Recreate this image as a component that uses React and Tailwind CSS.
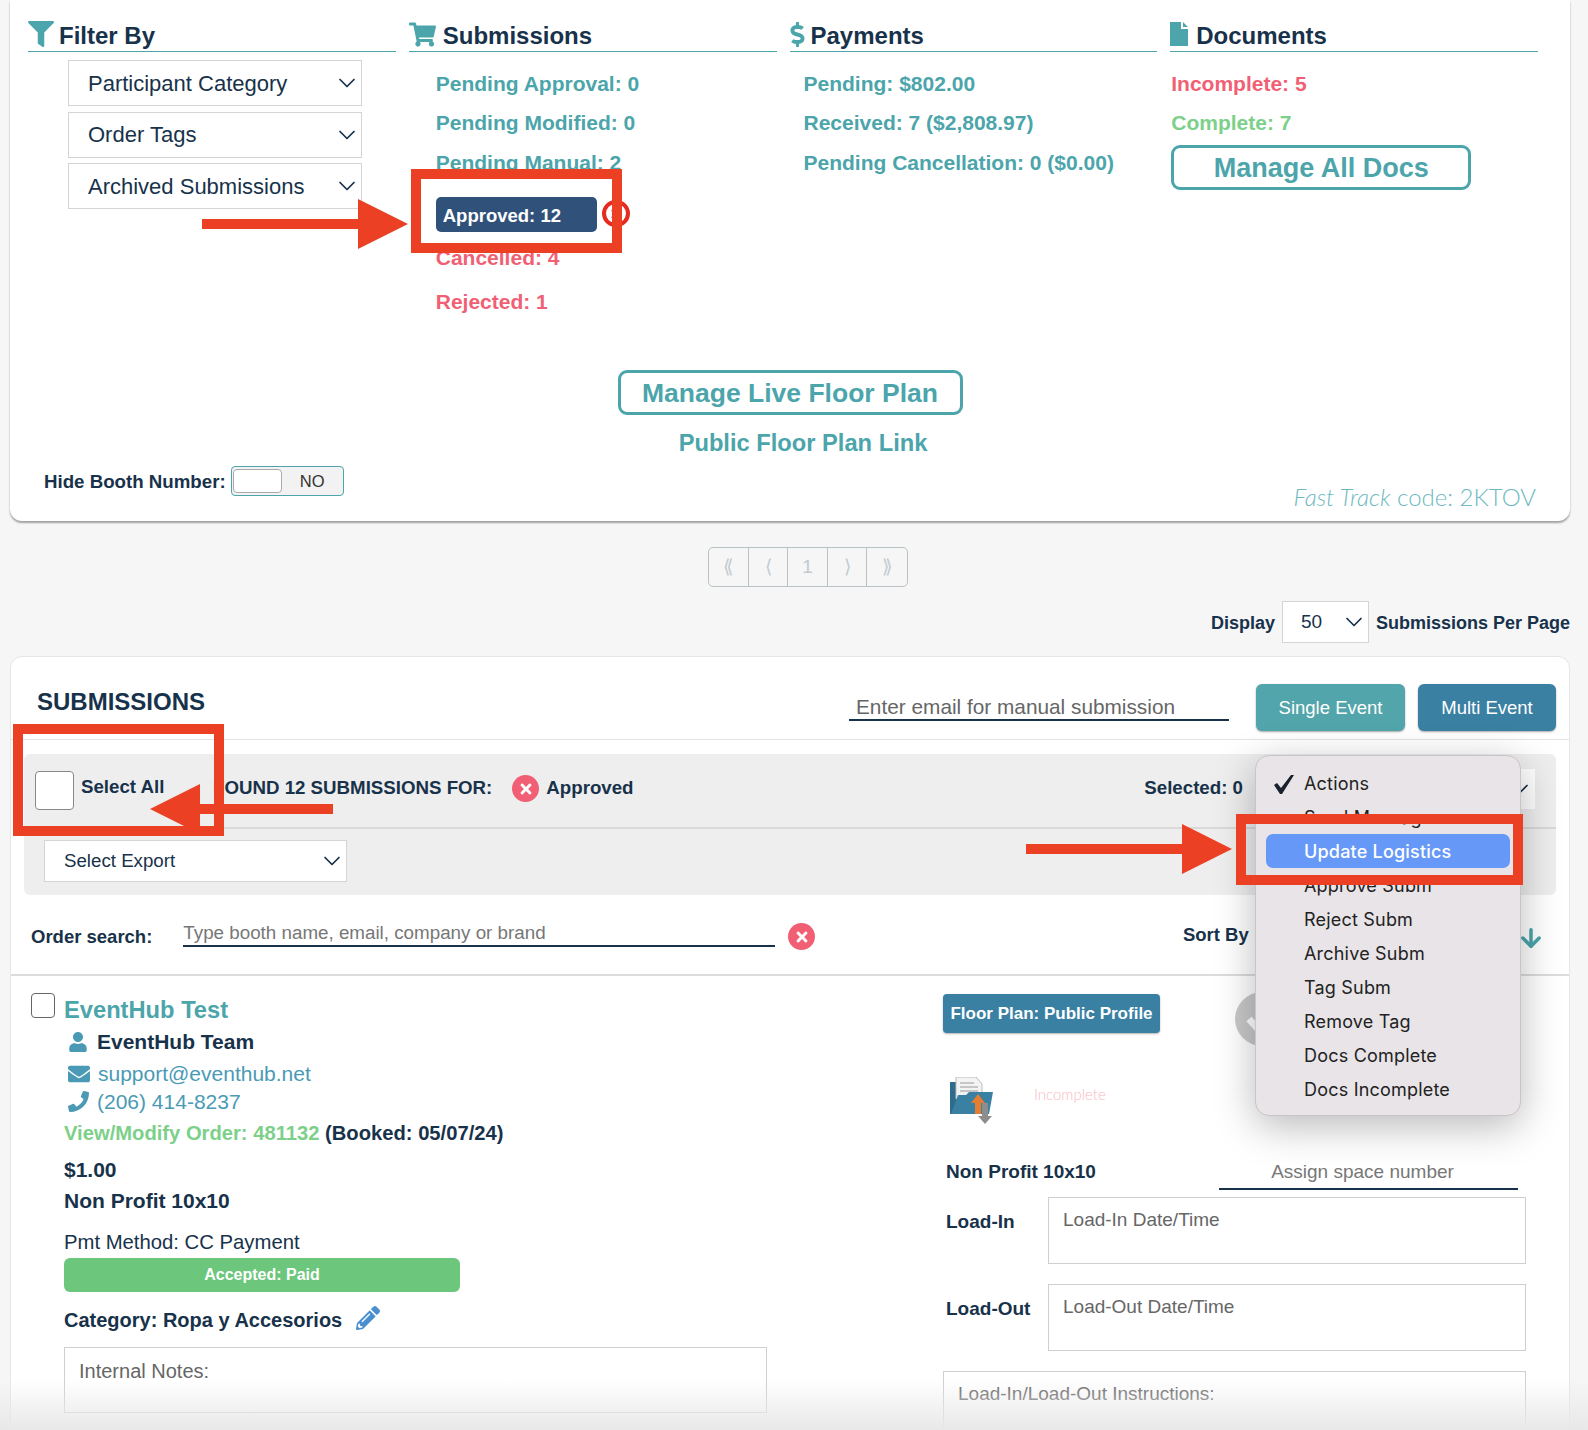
import { ChevronDown, ArrowDown } from 'lucide-react'
import { FaDollarSign, FaEnvelope, FaFilter, FaPencilAlt, FaPhoneAlt, FaShoppingCart, FaTimes, FaUser } from 'react-icons/fa'

const menuItems = ['Reject Subm', 'Archive Subm', 'Tag Subm', 'Remove Tag', 'Docs Complete', 'Docs Incomplete']

function Heading({ icon, title }) {
  return (
    <div className="flex h-[52px] items-end gap-[5px] border-b-[1.5px] border-[#4ba5ab] text-[24px] leading-[30px] font-bold text-[#17324a]">
      <span className="mb-[4px] flex h-[26px] items-center text-[#4ba5ab]">{icon}</span>
      {title}
    </div>
  )
}

function Dropdown({ label, className }) {
  return (
    <div className={`flex items-center justify-between border-[1.5px] border-[#d4d4d4] bg-white text-[#17324a] ${className}`}>
      <span>{label}</span>
      <ChevronDown size={28} strokeWidth={1.5} />
    </div>
  )
}

function Stat({ children, color = 'text-[#4ba5ab]', className = '' }) {
  return <div className={`flex h-[40px] items-center text-[21px] font-bold ${color} ${className}`}>{children}</div>
}

function XCircle() {
  return (
    <span className="flex h-[27px] w-[27px] items-center justify-center rounded-full bg-[#f15f74] text-white">
      <FaTimes size={16} />
    </span>
  )
}

function PageCell({ children, last }) {
  return (
    <div className={`flex h-full w-[39.5px] items-center justify-center text-[19px] text-[#c3cbce] ${last ? '' : 'border-r-[1.5px] border-[#b9c2c6]'}`}>
      {children}
    </div>
  )
}

function Arrow({ className, width, height, points }) {
  return (
    <svg className={`absolute z-30 ${className}`} width={width} height={height} viewBox={`0 0 ${width} ${height}`}>
      <polygon points={points} fill="#ec4024" />
    </svg>
  )
}

function App() {
  return (
    <div className="relative h-[1430px] overflow-hidden bg-[#f6f6f6] font-['Liberation_Sans',Arial,sans-serif] text-[#17324a]">
      {/* top summary card */}
      <section className="mr-[18px] ml-[10px] h-[521px] rounded-b-xl bg-white shadow-[0_2px_2px_rgba(0,0,0,0.35)]">
        <div className="grid h-[322px] grid-cols-4 gap-x-[13px] pr-[32px] pl-[18px]">
          <div>
            <Heading icon={<FaFilter size={26} />} title="Filter By" />
            <div className="mt-[8px] ml-[40px] flex w-[294px] flex-col gap-[5.5px] text-[22px]">
              <Dropdown label="Participant Category" className="h-[46px] pl-[19px]" />
              <Dropdown label="Order Tags" className="h-[46px] pl-[19px]" />
              <Dropdown label="Archived Submissions" className="h-[46px] pl-[19px]" />
            </div>
          </div>

          <div>
            <Heading icon={<FaShoppingCart size={27} className="mr-[2px]" />} title="Submissions" />
            <div className="mt-[12px] pl-[27px]">
              <Stat>Pending Approval: 0</Stat>
              <Stat className="-mt-px">Pending Modified: 0</Stat>
              <Stat>Pending Manual: 2</Stat>
              <div className="mt-[14px] flex h-[35px] w-[161px] items-center rounded-[5px] bg-[#30527a] pt-[2px] pl-[7px] text-[18.5px] font-bold text-white">Approved: 12</div>
              <Stat color="text-[#f15f74]" className="mt-[6px]">Cancelled: 4</Stat>
              <Stat color="text-[#f15f74]" className="mt-[4px]">Rejected: 1</Stat>
            </div>
          </div>

          <div>
            <Heading icon={<FaDollarSign size={25} className="-mr-[4px] -ml-[5px]" />} title="Payments" />
            <div className="mt-[12px] pl-[14px]">
              <Stat>Pending: $802.00</Stat>
              <Stat className="-mt-px">Received: 7 ($2,808.97)</Stat>
              <Stat>Pending Cancellation: 0 ($0.00)</Stat>
            </div>
          </div>

          <div>
            <Heading
              icon={
                <svg className="mr-[3px]" width="18" height="24" viewBox="0 0 18 24" fill="#4ba5ab">
                  <path d="M0 0h11v7h7v17H0zM13 0l5 5h-5z" />
                </svg>
              }
              title="Documents"
            />
            <div className="mt-[12px] pl-[1px]">
              <Stat color="text-[#f15f74]">Incomplete: 5</Stat>
              <Stat color="text-[#7dd089]" className="-mt-px">Complete: 7</Stat>
              <div className="mt-[2px] flex h-[45px] w-[300px] items-center justify-center rounded-[9px] border-[3px] border-[#4ba5ab] pt-[2px] text-[27px] font-bold text-[#4ba5ab]">Manage All Docs</div>
            </div>
          </div>
        </div>

        <div className="mt-[48px] flex flex-col items-center">
          <div className="flex h-[45px] w-[345px] items-center justify-center rounded-[9px] border-[3px] border-[#4ba5ab] pt-[2px] text-[26.5px] font-bold text-[#4ba5ab]">Manage Live Floor Plan</div>
          <div className="mt-[14px] pl-[26px] text-[23.7px] leading-[28px] font-bold text-[#4ba5ab]">Public Floor Plan Link</div>
        </div>

        <div className="mt-[9px] flex items-start justify-between pr-[34px] pl-[34px]">
          <div className="flex h-[30px] items-center gap-[5px]">
            <span className="pt-[2px] text-[18.7px] font-bold">Hide Booth Number:</span>
            <div className="flex h-[30px] w-[113px] items-center rounded-[4px] border-[1.5px] border-[#4ba5ab] bg-[#f2f2f2] pl-[1px]">
              <span className="h-[24px] w-[49px] rounded-[4px] border border-[#aaa] bg-white" />
              <span className="flex-1 text-center text-[16.5px] text-[#333]">NO</span>
            </div>
          </div>
          <div className="mt-[17px] font-['Lato',sans-serif] text-[24px] leading-[28px] font-light text-[#6db9bf]">
            <i>Fast Track</i> code: 2KTOV
          </div>
        </div>
      </section>

      {/* pagination */}
      <div className="mt-[26px] flex justify-center pl-[28px]">
        <div className="flex h-[40px] rounded-[5px] border-[1.5px] border-[#b9c2c6]">
          <PageCell>⟪</PageCell>
          <PageCell>⟨</PageCell>
          <PageCell>1</PageCell>
          <PageCell>⟩</PageCell>
          <PageCell last>⟫</PageCell>
        </div>
      </div>

      <div className="mt-[14px] flex h-[42px] items-center justify-end gap-[7px] pr-[18px] text-[18px] font-bold">
        <span className="pt-[2px]">Display</span>
        <Dropdown label={<span className="text-[19px] font-normal">50</span>} className="h-[42px] w-[87px] pl-[18px]" />
        <span className="pt-[2px]">Submissions Per Page</span>
      </div>

      {/* submissions card */}
      <section className="mt-[13px] mr-[18px] ml-[10px] h-[800px] rounded-t-xl border border-[#e6e6e6] bg-white">
        <div className="flex h-[83px] items-start justify-between border-b-[1.5px] border-[#e4e4e4] pr-[13px] pl-[26px]">
          <h2 className="mt-[30px] text-[24px] leading-[30px] font-bold">SUBMISSIONS</h2>
          <div className="mt-[27px] flex items-start">
            <input
              placeholder="Enter email for manual submission"
              className="mt-[7px] mr-[27px] h-[30px] w-[380px] border-b-2 border-[#17324a] pt-[4px] pl-[7px] text-[20.8px] outline-none placeholder:text-[#666]"
            />
            <button className="mr-[13px] h-[47px] w-[149px] rounded-[6px] bg-[#52a5aa] text-[18.5px] text-white shadow-[0_1px_2px_rgba(0,0,0,0.35)]">Single Event</button>
            <button className="h-[47px] w-[138px] rounded-[6px] bg-[#3a80a3] text-[18.5px] text-white shadow-[0_1px_2px_rgba(0,0,0,0.35)]">Multi Event</button>
          </div>
        </div>

        <div className="mx-[13px] mt-[14px] h-[141px] rounded-[6px] bg-[#eeeeee]">
          <div className="flex h-[75px] items-center border-b-2 border-[#d9d9d9] pr-[21px] pl-[11px] text-[18.7px] font-bold">
            <span className="mr-[7px] h-[39px] w-[39px] rounded-[4px] border-[1.5px] border-[#888] bg-white" />
            <span className="w-[132px] pb-[6px]">Select All</span>
            <span className="pb-[4px]">FOUND 12 SUBMISSIONS FOR:</span>
            <span className="mr-[7px] ml-[20px] pb-[4px]"><XCircle /></span>
            <span className="pb-[4px]">Approved</span>
            <span className="mr-[22px] ml-auto pb-[4px]">Selected: 0</span>
            <Dropdown label="" className="mb-[4px] h-[40px] w-[270px] border-transparent" />
          </div>
          <Dropdown label="Select Export" className="mt-[11px] ml-[20px] h-[42px] w-[303px] pl-[19px] text-[18.7px]" />
        </div>

        <div className="flex h-[81px] items-center border-b-2 border-[#dcdcdc] pr-[24px] pl-[20px] text-[18.5px]">
          <span className="mr-[31px] pt-[5px] font-bold">Order search:</span>
          <input
            placeholder="Type booth name, email, company or brand"
            className="mb-[3px] h-[27px] w-[592px] border-b-2 border-[#17324a] pt-[3px] text-[18.8px] outline-none placeholder:text-[#777]"
          />
          <span className="ml-[13px] pt-[4px]"><XCircle /></span>
          <span className="mr-[257px] ml-auto font-bold">Sort By :</span>
          <ArrowDown size={28} strokeWidth={3} className="mt-[7px] text-[#4ba5ab]" />
        </div>

        {/* order row */}
        <div className="grid grid-cols-[932px_1fr] pt-[17px]">
          <div className="pl-[20px]">
            <div className="flex">
              <span className="h-[25px] w-[24px] rounded-[4px] border-[1.5px] border-[#666] bg-white" />
              <span className="mt-[2px] ml-[9px] text-[23.7px] leading-[30px] font-bold text-[#4ba5ab]">EventHub Test</span>
            </div>
            <div className="mt-[2px] ml-[37px] flex h-[30px] items-center gap-[9px] text-[21px] font-bold">
              <FaUser size={20} className="text-[#4a9ab5]" /> EventHub Team
            </div>
            <div className="mt-[1px] ml-[37px] flex h-[31px] items-center gap-[8px] text-[21px] text-[#4a9ab5]">
              <FaEnvelope size={22} /> support@eventhub.net
            </div>
            <div className="-mt-[3px] ml-[37px] flex h-[31px] items-center gap-[8px] text-[21px] text-[#4a9ab5]">
              <FaPhoneAlt size={21} className="-scale-x-100" /> (206) 414-8237
            </div>
            <div className="mt-[1px] ml-[33px] h-[30px] text-[20.2px] leading-[30px] font-bold text-[#7dd089]">
              View/Modify Order: 481132 <span className="text-[#17324a]">(Booked: 05/07/24)</span>
            </div>
            <div className="mt-[7px] ml-[33px] text-[21px] leading-[30px] font-bold">$1.00</div>
            <div className="mt-[1px] ml-[33px] text-[21px] leading-[30px] font-bold">Non Profit 10x10</div>
            <div className="mt-[11px] ml-[33px] text-[20.3px] leading-[30px]">Pmt Method: CC Payment</div>
            <div className="mt-[1px] ml-[33px] flex h-[34px] w-[396px] items-center justify-center rounded-[6px] bg-[#6cc67c] text-[16px] font-bold text-white">Accepted: Paid</div>
            <div className="mt-[13px] ml-[33px] flex h-[30px] items-center gap-[14px] text-[20px] font-bold">
              Category: Ropa y Accesorios <FaPencilAlt size={24} className="mb-[4px] text-[#4a90d0]" />
            </div>
            <div className="mt-[12px] ml-[33px] h-[66px] w-[703px] border-[1.5px] border-[#cfcfcf] px-[14px] pt-[8px] text-[20px] text-[#666]">Internal Notes:</div>
          </div>

          <div>
            <div className="flex items-start">
              <div className="mt-[1px] flex h-[39px] w-[217px] items-center justify-center rounded-[4px] bg-[#3a80a3] text-[17px] font-bold text-white shadow-[0_1px_2px_rgba(0,0,0,0.3)]">Floor Plan: Public Profile</div>
              <svg className="-mt-[1px] ml-[75px]" width="54" height="54" viewBox="0 0 54 54">
                <circle cx="27" cy="27" r="27" fill="#c9c9c9" />
                <path d="M14 27l9 10 18-20" fill="none" stroke="#fff" strokeWidth="7" />
              </svg>
            </div>
            <div className="mt-[31px] flex items-center">
              <svg className="ml-[5px]" width="46" height="47" viewBox="0 0 46 47">
                <path d="M2 5h8l2 6v26H2z" fill="#2f6c8c" />
                <path d="M8 0h20l6 7v15H8z" fill="#f3f3f3" stroke="#bbb" />
                <path d="M12 6h14M12 10h18M12 14h18" stroke="#999" />
                <path d="M3 37l7-19h8l3-3h24l-4 22z" fill="#3a80a3" />
                <path d="M30 17l7 9h-4v11h-6V26h-4z" fill="#e67e32" />
                <path d="M34 26h6v13h4l-7 8-7-8h4z" fill="#8d8d8d" />
              </svg>
              <span className="mb-[12px] ml-[40px] font-['Lato',sans-serif] text-[15px] font-light text-[#f8b9c4]">Incomplete</span>
            </div>
            <div className="mt-[31px] flex items-center">
              <span className="ml-[3px] w-[273px] text-[19px] font-bold">Non Profit 10x10</span>
              <input
                placeholder="Assign space number"
                className="h-[35px] w-[299px] border-b-2 border-[#17324a] pr-[12px] text-center text-[19px] outline-none placeholder:text-[#777]"
              />
            </div>
            <div className="mt-[7px] flex">
              <span className="mt-[11px] ml-[3px] w-[102px] text-[19px] font-bold">Load-In</span>
              <div className="h-[67px] w-[478px] border-[1.5px] border-[#cfcfcf] px-[14px] pt-[8px] text-[19px] text-[#666]">Load-In Date/Time</div>
            </div>
            <div className="mt-[20px] flex">
              <span className="mt-[11px] ml-[3px] w-[102px] text-[19px] font-bold">Load-Out</span>
              <div className="h-[67px] w-[478px] border-[1.5px] border-[#cfcfcf] px-[14px] pt-[8px] text-[19px] text-[#666]">Load-Out Date/Time</div>
            </div>
            <div className="mt-[20px] h-[90px] w-[583px] border-[1.5px] border-[#cfcfcf] px-[14px] pt-[8px] text-[19px] text-[#666]">Load-In/Load-Out Instructions:</div>
          </div>
        </div>
      </section>

      {/* native actions menu, open over the page */}
      <div className="absolute top-[755px] left-[1255px] z-10 h-[361px] w-[266px] rounded-[14px] border border-[#c8c4c7] bg-[#e8e4e7] font-['Inter',sans-serif] text-[18px] leading-[34px] tracking-[0.2px] text-[#222] shadow-[0_10px_40px_rgba(0,0,0,0.28)]">
        <div className="relative mt-[11px] pl-[48px]">
          <svg className="absolute top-[8px] left-[18px]" width="20" height="20" viewBox="0 0 20 20" fill="#17222c">
            <path d="M0 10l3-2 4 5L17 0h3L8 19H6z" />
          </svg>
          Actions
        </div>
        <div className="pl-[48px]">Send Message</div>
        <div className="mx-[10px] -mt-px mb-px flex h-[34px] items-center rounded-[7px] bg-[#6699f7] pt-[1px] pl-[38px] font-medium text-white">Update Logistics</div>
        <div className="pl-[48px]">Approve Subm</div>
        {menuItems.map((item) => (
          <div key={item} className="pl-[48px]">{item}</div>
        ))}
      </div>

      {/* red annotations from the screenshot */}
      <span className="absolute top-[200px] left-[602px] z-20 flex h-[27px] w-[28px] items-center justify-center rounded-full border-[4px] border-[#e62a20] text-[#f15f74]">
        <FaTimes size={14} />
      </span>
      <div className="absolute top-[169px] left-[411px] z-30 h-[84px] w-[211px] border-[10px] border-[#ec4024]" />
      <Arrow className="top-[199px] left-[202px]" width={206} height={50} points="0,20 156,20 156,0 206,25 156,50 156,30 0,30" />
      <div className="absolute top-[724px] left-[13px] z-30 h-[112px] w-[211px] border-[10px] border-[#ec4024]" />
      <Arrow className="top-[784px] left-[150px]" width={183} height={50} points="0,25 50,0 50,20 183,20 183,30 50,30 50,50" />
      <div className="absolute top-[814px] left-[1236px] z-30 h-[71px] w-[287px] border-[10px] border-[#ec4024]" />
      <Arrow className="top-[824px] left-[1026px]" width={206} height={50} points="0,20 156,20 156,0 206,25 156,50 156,30 0,30" />

      {/* bottom fade */}
      <div className="pointer-events-none absolute right-0 bottom-0 left-0 z-40 h-[50px] bg-gradient-to-b from-transparent to-[#e8e8e8]" />
    </div>
  )
}

export default App
